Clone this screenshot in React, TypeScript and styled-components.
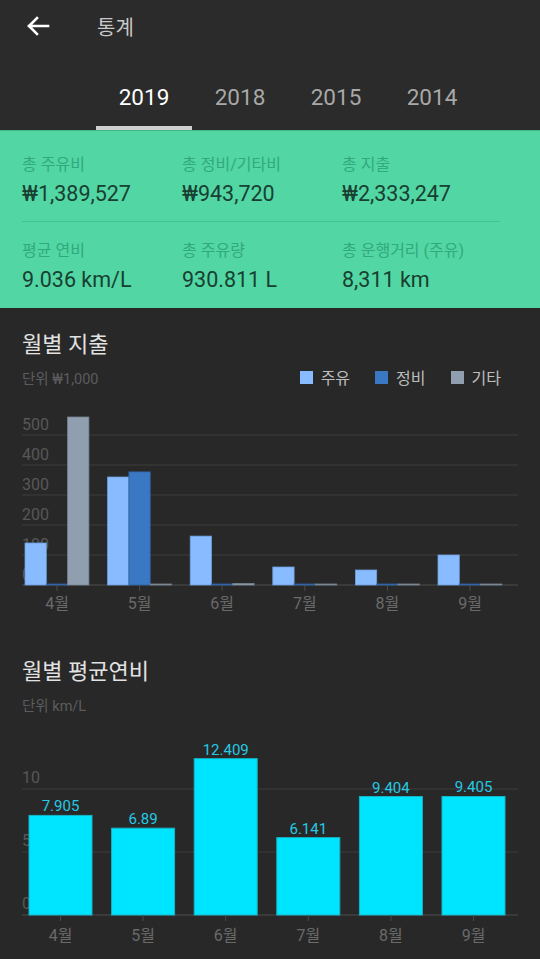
import styled, { createGlobalStyle } from "styled-components";

const GlobalStyle = createGlobalStyle`
  html, body {
    margin: 0;
    padding: 0;
    background: #282828;
    font-family: Roboto, "Noto Sans CJK KR", sans-serif;
  }
  * { box-sizing: border-box; }
`;

const Page = styled.div`
  width: 540px;
  height: 959px;
  overflow: hidden;
  background: #282828;
`;

const TopBar = styled.div`
  background: #2b2b2b;
`;

const AppBar = styled.div`
  height: 52px;
  display: flex;
  align-items: center;
  padding-left: 26px;
`;

const Title = styled.div`
  margin-left: 47px;
  font-size: 20px;
  color: #c8c8c8;
`;

const Tabs = styled.div`
  display: flex;
  padding-left: 96px;
`;

const Tab = styled.div<{ $active?: boolean }>`
  width: 96px;
  height: 78px;
  padding-top: 16px;
  display: flex;
  align-items: center;
  justify-content: center;
  font-size: 22.5px;
  color: ${(p) => (p.$active ? "#ffffff" : "#a8a8a8")};
  border-bottom: 4px solid ${(p) => (p.$active ? "#cfcfcf" : "transparent")};
`;

const Summary = styled.div`
  background: #52d6a4;
  border-top: 1px solid #3fb98a;
  padding: 24px 22px 14px;
`;

const SummaryRow = styled.div`
  display: grid;
  grid-template-columns: 160px 160px 160px;
`;

const Divider = styled.div`
  width: 478px;
  height: 1px;
  background: #43c493;
  margin: 13px 0 19px;
`;

const Label = styled.div`
  font-size: 16px;
  line-height: 20px;
  color: #31a97e;
`;

const Value = styled.div`
  margin-top: 5px;
  font-size: 21.5px;
  line-height: 28px;
  color: #183f31;
`;

const Section = styled.div<{ $top: number }>`
  padding-top: ${(p) => p.$top}px;
`;

const SectionHead = styled.div`
  padding: 0 22px;
`;

const SectionTitle = styled.div`
  font-size: 22px;
  line-height: 30px;
  color: #e2e2e2;
`;

const SubRow = styled.div`
  display: flex;
  align-items: center;
  justify-content: space-between;
  margin-top: 7px;
  height: 20px;
`;

const Unit = styled.div`
  font-size: 14.5px;
  color: #5c5c5c;
`;

const Legend = styled.div`
  display: flex;
  gap: 25px;
  padding-right: 17px;
`;

const LegendItem = styled.div`
  display: flex;
  align-items: center;
  gap: 8px;
  font-size: 16px;
  color: #bdbdbd;
`;

const Swatch = styled.span<{ $color: string }>`
  width: 13px;
  height: 13px;
  background: ${(p) => p.$color};
`;

const Chart = styled.svg<{ $mt: number }>`
  display: block;
  margin-top: ${(p) => p.$mt}px;
`;

const months = ["4월", "5월", "6월", "7월", "8월", "9월"];
const colors = ["#88bbff", "#3a78c4", "#8f9fb0"];
const strokes = ["#6e9fdc", "#2f62a3", "#75838f"];
const spend = [
  [140, 1, 560],
  [360, 377, 2],
  [163, 1, 5],
  [60, 1, 1],
  [50, 1, 1],
  [100, 1, 1],
];
const fuel = [7.905, 6.89, 12.409, 6.141, 9.404, 9.405];

const axisFont = "Roboto, 'Noto Sans CJK KR', sans-serif";

function SpendChart() {
  const base = 185;
  const step = 82.6;
  return (
    <Chart $mt={13} width={540} height={220} viewBox="0 0 540 220">
      {[0, 1, 2, 3, 4, 5].map((i) => (
        <g key={i}>
          <line x1={22} x2={518} y1={base - i * 30} y2={base - i * 30} stroke={i === 0 ? "#404040" : "#363636"} strokeWidth={1.5} />
          <text x={22} y={base - i * 30 - 5} fontSize={16} fill="#575757" fontFamily={axisFont}>
            {i * 100}
          </text>
        </g>
      ))}
      {spend.map((vals, g) => {
        const x0 = 25 + g * step;
        return (
          <g key={g}>
            {vals.map((v, b) => {
              const h = Math.max(1, v * 0.3);
              return (
                <rect key={b} x={x0 + b * 21.3} y={base - h} width={21.3} height={h} fill={colors[b]} stroke={strokes[b]} strokeWidth={0.8} />
              );
            })}
            <line x1={x0 + 32} x2={x0 + 32} y1={base} y2={base + 6} stroke="#4a4a4a" strokeWidth={1} />
            <text x={x0 + 32} y={209} textAnchor="middle" fontSize={16} fill="#6a6a6a" fontFamily={axisFont}>
              {months[g]}
            </text>
          </g>
        );
      })}
    </Chart>
  );
}

function FuelChart() {
  const base = 183;
  const unit = 12.6;
  const step = 82.6;
  return (
    <Chart $mt={18} width={540} height={229} viewBox="0 0 540 229">
      {[0, 5, 10].map((v) => (
        <g key={v}>
          <line x1={22} x2={518} y1={base - v * unit} y2={base - v * unit} stroke={v === 0 ? "#404040" : "#363636"} strokeWidth={1.5} />
          <text x={22} y={base - v * unit - 6} fontSize={16} fill="#575757" fontFamily={axisFont}>
            {v}
          </text>
        </g>
      ))}
      {fuel.map((v, g) => {
        const x0 = 29 + g * step;
        const h = v * unit;
        return (
          <g key={g}>
            <rect x={x0} y={base - h} width={63} height={h} fill="#00e5ff" stroke="#17b3c6" strokeWidth={1} />
            <text x={x0 + 31.5} y={base - h - 4} textAnchor="middle" fontSize={15} fill="#26c8e2" fontFamily={axisFont}>
              {v}
            </text>
            <line x1={x0 + 31.5} x2={x0 + 31.5} y1={base} y2={base + 6} stroke="#4a4a4a" strokeWidth={1} />
            <text x={x0 + 31.5} y={209} textAnchor="middle" fontSize={16} fill="#6a6a6a" fontFamily={axisFont}>
              {months[g]}
            </text>
          </g>
        );
      })}
    </Chart>
  );
}

const summary = [
  [
    ["총 주유비", "₩1,389,527"],
    ["총 정비/기타비", "₩943,720"],
    ["총 지출", "₩2,333,247"],
  ],
  [
    ["평균 연비", "9.036 km/L"],
    ["총 주유량", "930.811 L"],
    ["총 운행거리 (주유)", "8,311 km"],
  ],
];

export default function App() {
  return (
    <Page>
      <GlobalStyle />
      <TopBar>
        <AppBar>
          <svg width="24" height="20" viewBox="0 0 24 20">
            <path d="M22 10H3M11 2L3 10l8 8" fill="none" stroke="#ffffff" strokeWidth="2.6" strokeLinecap="square" />
          </svg>
          <Title>통계</Title>
        </AppBar>
        <Tabs>
          {["2019", "2018", "2015", "2014"].map((y, i) => (
            <Tab key={y} $active={i === 0}>
              {y}
            </Tab>
          ))}
        </Tabs>
      </TopBar>
      <Summary>
        {summary.map((row, r) => (
          <div key={r}>
            {r > 0 && <Divider />}
            <SummaryRow>
              {row.map(([l, v]) => (
                <div key={l}>
                  <Label>{l}</Label>
                  <Value>{v}</Value>
                </div>
              ))}
            </SummaryRow>
          </div>
        ))}
      </Summary>
      <Section $top={22}>
        <SectionHead>
          <SectionTitle>월별 지출</SectionTitle>
          <SubRow>
            <Unit>단위 ₩1,000</Unit>
            <Legend>
              <LegendItem>
                <Swatch $color={colors[0]} />
                주유
              </LegendItem>
              <LegendItem>
                <Swatch $color={colors[1]} />
                정비
              </LegendItem>
              <LegendItem>
                <Swatch $color={colors[2]} />
                기타
              </LegendItem>
            </Legend>
          </SubRow>
        </SectionHead>
        <SpendChart />
      </Section>
      <Section $top={37}>
        <SectionHead>
          <SectionTitle>월별 평균연비</SectionTitle>
          <SubRow>
            <Unit>단위 km/L</Unit>
          </SubRow>
        </SectionHead>
        <FuelChart />
      </Section>
    </Page>
  );
}
